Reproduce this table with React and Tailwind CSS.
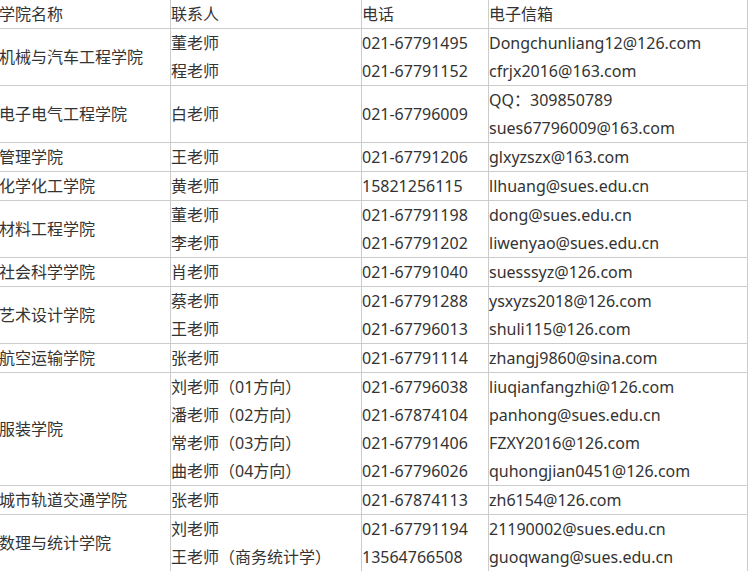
import React from "react";

const rows = [
  {
    name: "机械与汽车工程学院",
    people: ["董老师", "程老师"],
    phones: ["021-67791495", "021-67791152"],
    emails: ["Dongchunliang12@126.com", "cfrjx2016@163.com"],
  },
  {
    name: "电子电气工程学院",
    people: ["白老师"],
    phones: ["021-67796009"],
    emails: ["QQ：309850789", "sues67796009@163.com"],
  },
  { name: "管理学院", people: ["王老师"], phones: ["021-67791206"], emails: ["glxyzszx@163.com"] },
  { name: "化学化工学院", people: ["黄老师"], phones: ["15821256115"], emails: ["llhuang@sues.edu.cn"] },
  {
    name: "材料工程学院",
    people: ["董老师", "李老师"],
    phones: ["021-67791198", "021-67791202"],
    emails: ["dong@sues.edu.cn", "liwenyao@sues.edu.cn"],
  },
  { name: "社会科学学院", people: ["肖老师"], phones: ["021-67791040"], emails: ["suesssyz@126.com"] },
  {
    name: "艺术设计学院",
    people: ["蔡老师", "王老师"],
    phones: ["021-67791288", "021-67796013"],
    emails: ["ysxyzs2018@126.com", "shuli115@126.com"],
  },
  { name: "航空运输学院", people: ["张老师"], phones: ["021-67791114"], emails: ["zhangj9860@sina.com"] },
  {
    name: "服装学院",
    people: ["刘老师（01方向）", "潘老师（02方向）", "常老师（03方向）", "曲老师（04方向）"],
    phones: ["021-67796038", "021-67874104", "021-67791406", "021-67796026"],
    emails: [
      "liuqianfangzhi@126.com",
      "panhong@sues.edu.cn",
      "FZXY2016@126.com",
      "quhongjian0451@126.com",
    ],
  },
  { name: "城市轨道交通学院", people: ["张老师"], phones: ["021-67874113"], emails: ["zh6154@126.com"] },
  {
    name: "数理与统计学院",
    people: ["刘老师", "王老师（商务统计学）"],
    phones: ["021-67791194", "13564766508"],
    emails: ["21190002@sues.edu.cn", "guoqwang@sues.edu.cn"],
  },
];

function Lines({ items }) {
  return items.map((t, i) => (
    <div key={i} className="h-[28px] leading-[28px] whitespace-nowrap">
      {t}
    </div>
  ));
}

export default function App() {
  const cell = "border border-[#cccccc] p-0 align-middle";
  return (
    <div
      className="w-[748px] h-[571px] overflow-hidden bg-white text-[16px] text-[#333333]"
      style={{ fontFamily: '"Noto Sans", "Noto Sans CJK SC", sans-serif' }}
    >
      <table className="-ml-[2px] -mt-px table-fixed border-collapse w-[750px]">
        <colgroup>
          <col className="w-[172px]" />
          <col className="w-[191px]" />
          <col className="w-[127px]" />
          <col className="w-[259px]" />
        </colgroup>
        <thead>
          <tr>
            <td className={cell}>
              <Lines items={["学院名称"]} />
            </td>
            <td className={cell}>
              <Lines items={["联系人"]} />
            </td>
            <td className={cell}>
              <Lines items={["电话"]} />
            </td>
            <td className={cell}>
              <Lines items={["电子信箱"]} />
            </td>
          </tr>
        </thead>
        <tbody>
          {rows.map((r) => (
            <tr key={r.name}>
              <td className={cell}>
                <Lines items={[r.name]} />
              </td>
              <td className={cell}>
                <Lines items={r.people} />
              </td>
              <td className={cell}>
                <Lines items={r.phones} />
              </td>
              <td className={cell}>
                <Lines items={r.emails} />
              </td>
            </tr>
          ))}
        </tbody>
      </table>
    </div>
  );
}
